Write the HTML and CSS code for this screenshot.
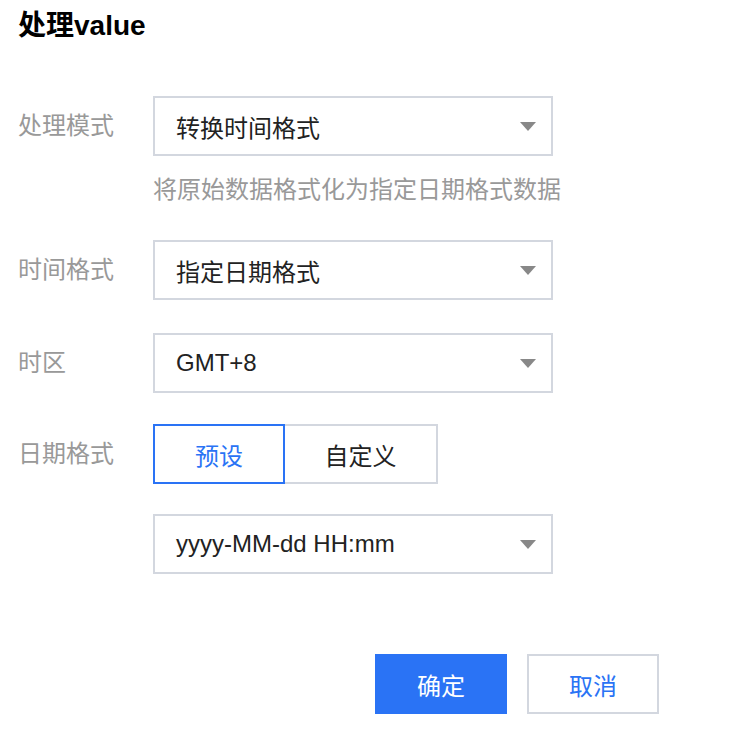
FILE: index.html
```html
<!DOCTYPE html>
<html lang="zh-CN">
<head>
  <meta charset="UTF-8">
  <meta name="viewport" content="width=device-width, initial-scale=1.0">
  <title>处理value</title>
  <link rel="stylesheet" href="styles.css">
</head>
<body>
  <div class="dialog">
    <h1>处理value</h1>

    <div class="row row-help">
      <div class="label">处理模式</div>
      <div class="control">
        <div class="select">
          <span>转换时间格式</span>
          <i class="arrow"></i>
        </div>
        <p class="help">将原始数据格式化为指定日期格式数据</p>
      </div>
    </div>

    <div class="row row-wide">
      <div class="label">时间格式</div>
      <div class="select">
        <span>指定日期格式</span>
        <i class="arrow"></i>
      </div>
    </div>

    <div class="row">
      <div class="label">时区</div>
      <div class="select">
        <span>GMT+8</span>
        <i class="arrow"></i>
      </div>
    </div>

    <div class="row row-tight">
      <div class="label">日期格式</div>
      <div class="segment">
        <button class="seg-btn active">预设</button>
        <button class="seg-btn wide">自定义</button>
      </div>
    </div>

    <div class="row">
      <div class="label"></div>
      <div class="select">
        <span>yyyy-MM-dd HH:mm</span>
        <i class="arrow"></i>
      </div>
    </div>

    <div class="footer">
      <button class="btn btn-primary">确定</button>
      <button class="btn btn-default">取消</button>
    </div>
  </div>
</body>
</html>
```

FILE: styles.css
```css
/* chung */
body {
  margin: 0;
  padding: 0;
  background: #fff;
  font-family: "Liberation Sans", "Noto Sans CJK SC", sans-serif;
  color: #222;
}
.dialog {
  padding: 6px 18px;
}
h1 {
  font-size: 28px;
  line-height: 40px;
  font-weight: bold;
  color: #000;
  margin: 0 0 50px;
}

/* form */
.row {
  display: flex;
  align-items: flex-start;
  margin-bottom: 31px;
}
.row-help {
  margin-bottom: 32px;
}
.row-wide {
  margin-bottom: 33px;
}
.row-tight {
  margin-bottom: 30px;
}
.label {
  width: 135px;
  flex-shrink: 0;
  font-size: 24px;
  line-height: 60px;
  color: #999;
}
.select {
  box-sizing: border-box;
  width: 400px;
  height: 60px;
  border: 2px solid #d3d7df;
  display: flex;
  align-items: center;
  padding: 0 15px 0 21px;
  font-size: 24px;
  color: #222;
}
.arrow {
  margin-left: auto;
  width: 0;
  height: 0;
  border-left: 8px solid transparent;
  border-right: 8px solid transparent;
  border-top: 9px solid #888;
}
.help {
  margin: 16px 0 0;
  font-size: 24px;
  line-height: 36px;
  color: #999;
}

/* chọn preset / custom */
.segment {
  display: flex;
}
.seg-btn {
  box-sizing: border-box;
  width: 132px;
  height: 60px;
  background: #fff;
  border: 2px solid #d3d7df;
  font-family: inherit;
  font-size: 24px;
  color: #222;
  padding: 0;
}
.seg-btn.wide {
  width: 153px;
  border-left: none;
}
.seg-btn.active {
  border-color: #2a73f5;
  color: #2a73f5;
}

/* nút */
.footer {
  display: flex;
  justify-content: flex-end;
  gap: 20px;
  margin-top: 80px;
  padding-right: 59px;
}
.btn {
  box-sizing: border-box;
  width: 132px;
  height: 60px;
  font-family: inherit;
  font-size: 24px;
  padding: 0;
  cursor: pointer;
}
.btn-primary {
  background: #2a73f5;
  border: none;
  color: #fff;
}
.btn-default {
  background: #fff;
  border: 2px solid #d3d7df;
  color: #2a73f5;
}
```
